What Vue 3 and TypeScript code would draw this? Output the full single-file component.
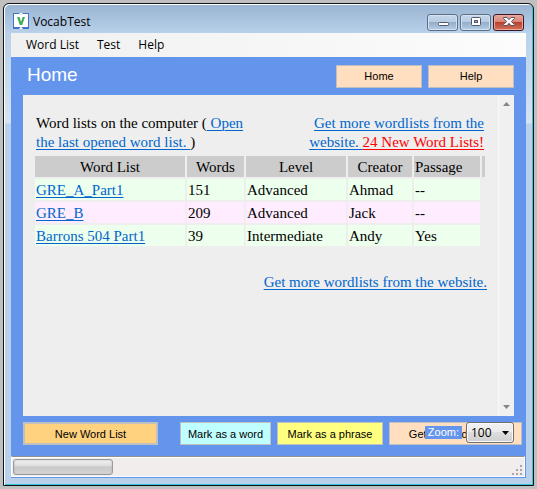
<script setup lang="ts">
import { ref } from 'vue'

interface WordList {
  name: string
  words: number
  level: string
  creator: string
  passage: string
}

const menus = ['Word List', 'Test', 'Help']
const lists: WordList[] = [
  { name: 'GRE_A_Part1', words: 151, level: 'Advanced', creator: 'Ahmad', passage: '--' },
  { name: 'GRE_B', words: 209, level: 'Advanced', creator: 'Jack', passage: '--' },
  { name: 'Barrons 504 Part1', words: 39, level: 'Intermediate', creator: 'Andy', passage: 'Yes' },
]
const zoom = ref('100')
</script>

<template>
  <div class="window">
    <header class="titlebar">
      <svg class="logo" width="16" height="16" viewBox="0 0 16 16" aria-hidden="true">
        <rect width="16" height="16" fill="#4472c4" />
        <path d="M1 1H7L8 2L9 1H15V14H9L8 15L7 14H1Z" fill="#fff" />
        <path d="M6 0H10L8 2ZM6 16L8 14L10 16Z" fill="#fff" />
        <path d="M4 4H6.6L8 9L9.6 4H12L9.2 12H6.8Z" fill="#3fae5a" />
      </svg>
      <span class="title">VocabTest</span>
      <div class="captions">
        <button class="caption" type="button" aria-label="Minimize">
          <svg width="12" height="10" viewBox="0 0 12 10"><rect x="1.5" y="5.5" width="10" height="3" rx="1" fill="#fff" stroke="#535666" /></svg>
        </button>
        <button class="caption" type="button" aria-label="Maximize">
          <svg width="12" height="10" viewBox="0 0 12 10">
            <rect x="1.5" y=".5" width="9" height="8" rx="1" fill="#fff" stroke="#535666" />
            <rect x="4.5" y="3.5" width="3" height="2" fill="#9db8d6" stroke="#535666" />
          </svg>
        </button>
        <button class="caption close" type="button" aria-label="Close">
          <svg width="12" height="10" viewBox="0 0 12 10"><path d="M.5.5H4L6 2.7L8 .5H11.5V1.5L8.3 4.5L11.5 7.6V8.5H8L6 6.3L4 8.5H.5V7.6L3.7 4.5L.5 1.5Z" fill="#fff" stroke="#535666" /></svg>
        </button>
      </div>
    </header>

    <div class="client">
      <nav class="menubar">
        <button v-for="m in menus" :key="m" type="button" class="menu">{{ m }}</button>
      </nav>

      <main class="body">
        <div class="heading">
          <h1>Home</h1>
          <div class="nav">
            <button type="button" class="btn peach">Home</button>
            <button type="button" class="btn peach">Help</button>
          </div>
        </div>

        <section class="browser">
          <div class="page">
            <div class="intro">
              <p>Word lists on the computer (<a href="#">&nbsp;Open the last opened word list. </a>)</p>
              <p class="right"><a href="#">Get more wordlists from the website. <span class="new">24 New Word Lists!</span></a></p>
            </div>
            <table>
              <colgroup>
                <col class="c-name"><col class="c-words"><col class="c-level"><col class="c-creator"><col class="c-passage"><col class="c-end">
              </colgroup>
              <thead>
                <tr>
                  <th>Word List</th>
                  <th>Words</th>
                  <th>Level</th>
                  <th>Creator</th>
                  <th class="left">Passage</th>
                  <th></th>
                </tr>
              </thead>
              <tbody>
                <tr v-for="l in lists" :key="l.name">
                  <td><a href="#">{{ l.name }}</a></td>
                  <td>{{ l.words }}</td>
                  <td>{{ l.level }}</td>
                  <td>{{ l.creator }}</td>
                  <td>{{ l.passage }}</td>
                </tr>
              </tbody>
            </table>
            <p class="more"><a href="#">Get more wordlists from the website.</a></p>
          </div>
          <div class="scrollbar" aria-hidden="true">
            <svg width="7" height="4" viewBox="0 0 7 4"><path d="M0 4L3.5 0L7 4Z" fill="#858585" /></svg>
            <svg width="7" height="4" viewBox="0 0 7 4"><path d="M0 0L3.5 4L7 0Z" fill="#858585" /></svg>
          </div>
        </section>

        <div class="actions">
          <button type="button" class="btn create">New Word List</button>
          <div class="marks">
            <button type="button" class="btn cyan">Mark as a word</button>
            <button type="button" class="btn yellow">Mark as a phrase</button>
            <button type="button" class="btn peach get">Get Related Words</button>
          </div>
          <div class="zoom">
            <label for="zoom">Zoom:</label>
            <div class="picker">
              <select id="zoom" v-model="zoom">
                <option>100</option>
                <option>125</option>
                <option>150</option>
              </select>
              <svg class="arrow" width="7" height="4" viewBox="0 0 7 4" aria-hidden="true"><path d="M0 0H7L3.5 4Z" fill="#000" /></svg>
            </div>
          </div>
        </div>
      </main>

      <footer class="status">
        <div class="progress" role="progressbar" aria-label="Progress"></div>
        <svg class="grip" width="11" height="11" viewBox="0 0 11 11" aria-hidden="true">
          <path d="M8 0h2v2h-2zM4 4h2v2h-2zM8 4h2v2h-2zM0 8h2v2h-2zM4 8h2v2h-2zM8 8h2v2h-2z" fill="#aaa6a6" />
        </svg>
      </footer>
    </div>
  </div>
</template>

<style>
body {
  background: #c0c0c0;
}
</style>

<style scoped>
* {
  box-sizing: border-box;
}
button,
select {
  margin: 0;
  padding: 0;
  font: inherit;
  color: inherit;
}
.window {
  display: flex;
  flex-direction: column;
  min-height: calc(100vh - 6px);
  margin: 3px;
  padding: 0 7px 7px;
  border: 1px solid #101418;
  border-radius: 6px 6px 0 0;
  background: linear-gradient(#99b4d1 0, #b9d1ea 29px, #d4e4f2 119px, #b9d1ea 120px);
  box-shadow: inset 1px 1px #fff, inset -1px -1px #35c4dc;
  font: 12px/16px "Open Sans", "Noto Sans", sans-serif;
  color: #000;
}
.titlebar {
  display: flex;
  align-items: center;
  gap: 4px;
  height: 29px;
  padding: 5px 2px 0;
}
.title {
  flex: 1;
  padding-top: 2px;
}
.captions {
  display: flex;
  gap: 2px;
  padding-top: 2px;
}
.caption {
  display: flex;
  align-items: center;
  justify-content: center;
  width: 31px;
  height: 17px;
  border: 1px solid #5b6f87;
  border-radius: 3px;
  background: linear-gradient(#c5d7ea 0, #b6cce2 48%, #94aecb 50%, #b5cfe8 100%);
  box-shadow: inset 0 0 0 1px #d5e3f1;
}
.close {
  border-color: #431422;
  background: linear-gradient(#e8a79c 0, #d98475 48%, #b8402c 50%, #d3735c 100%);
  box-shadow: inset 0 0 0 1px #e6aaa1;
}
.client {
  flex: 1;
  display: flex;
  flex-direction: column;
  background: #6495ed;
}
.menubar {
  display: flex;
  gap: 18px;
  height: 24px;
  padding: 0 15px;
  background: linear-gradient(90deg, #f0f0f0, #fcfcfc);
}
.menu {
  border: 0;
  background: none;
}
.body {
  flex: 1;
  display: flex;
  flex-direction: column;
  font-family: "Liberation Sans", Arial, sans-serif;
  font-size: 11px;
}
.heading {
  display: flex;
  align-items: center;
  justify-content: space-between;
  height: 38px;
  padding: 0 12px 0 16px;
}
h1 {
  margin: 0;
  padding-bottom: 2px;
  font-size: 19px;
  line-height: 24px;
  font-weight: 400;
  color: #fff;
}
.nav {
  display: flex;
  gap: 6px;
}
.btn {
  width: 86px;
  height: 23px;
  border: 1px solid #c0c0c0;
  white-space: nowrap;
}
.peach {
  background: #ffdfbf;
}
.browser {
  flex: 1;
  display: flex;
  margin: 0 12px;
  background: #eee;
}
.page {
  flex: 1;
  padding: 19px 11px 18px 10px;
  font: 15px/19px "Liberation Serif", "Times New Roman", serif;
}
.page a {
  color: #0066cc;
  text-underline-offset: 2px;
  text-decoration-thickness: 1px;
}
.page p {
  margin: 0;
}
.intro {
  display: grid;
  grid-template-columns: 1fr 1fr;
  gap: 10px;
  padding: 0 3px 2px;
}
.intro .right {
  text-align: right;
}
.page .new {
  color: #f00;
  text-decoration: underline;
  text-decoration-thickness: 1px;
  text-underline-offset: 2px;
}
table {
  width: 100%;
  table-layout: fixed;
  border-collapse: separate;
  border-spacing: 2px;
}
.c-words {
  width: 57px;
}
.c-level {
  width: 100px;
}
.c-creator {
  width: 64px;
}
.c-passage {
  width: 66px;
}
.c-end {
  width: 3px;
}
th,
td {
  height: 21px;
  padding: 2px 1px 0;
}
th {
  background: #ccc;
  font-weight: 400;
  text-align: center;
}
.left {
  text-align: left;
}
td {
  background: #edffed;
}
tbody tr:nth-child(even) td {
  background: #ffedff;
}
.page .more {
  margin-top: 25px;
  text-align: right;
}
.scrollbar {
  display: flex;
  flex-direction: column;
  align-items: center;
  justify-content: space-between;
  width: 16px;
  padding: 7px 0;
  border-left: 1px solid #f8f8f8;
  background: #f0f0f0;
}
.actions {
  position: relative;
  display: flex;
  justify-content: space-between;
  padding: 6px 4px 11px 12px;
}
.create {
  width: 135px;
  border-width: 2px;
  background: #ffd280;
}
.marks {
  display: flex;
  gap: 6px;
}
.cyan {
  width: 91px;
  background: #bfffff;
}
.yellow {
  width: 106px;
  background: #ffff80;
}
.get {
  width: 133px;
}
.zoom {
  position: absolute;
  top: 6px;
  right: 12px;
  display: flex;
  align-items: center;
  gap: 4px;
}
.zoom label {
  padding: 0 3px;
  background: #6495ed;
  color: #fff;
  line-height: 13px;
}
.picker {
  position: relative;
  display: flex;
}
.picker select {
  width: 48px;
  height: 21px;
  padding-left: 4px;
  appearance: none;
  border: 1px solid #707070;
  border-radius: 3px;
  background: linear-gradient(#f2f2f2 0, #ebebeb 48%, #ddd 50%, #cfcfcf 100%);
  box-shadow: inset 0 0 0 1px #f8f8f8;
  font: 12px/16px "Open Sans", "Noto Sans", sans-serif;
}
.arrow {
  position: absolute;
  top: 9px;
  right: 5px;
  pointer-events: none;
}
.status {
  display: flex;
  align-items: center;
  justify-content: space-between;
  height: 21px;
  margin: 0 1px 1px 0;
  padding: 0 1px;
  border: 1px solid #fff;
  border-top: 1px solid #919191;
  background: #f1edec;
  box-shadow: inset 0 1px #fff;
}
.progress {
  width: 100px;
  height: 16px;
  border: 1px solid #9a9a9a;
  border-radius: 3px;
  background: linear-gradient(#f4f4f4 0, #dedede 40%, #c9c9c9 50%, #cfcfcf 80%, #dcdcdc 100%);
  box-shadow: inset 0 0 2px #b0b0b0;
}
.grip {
  align-self: flex-end;
}
</style>
